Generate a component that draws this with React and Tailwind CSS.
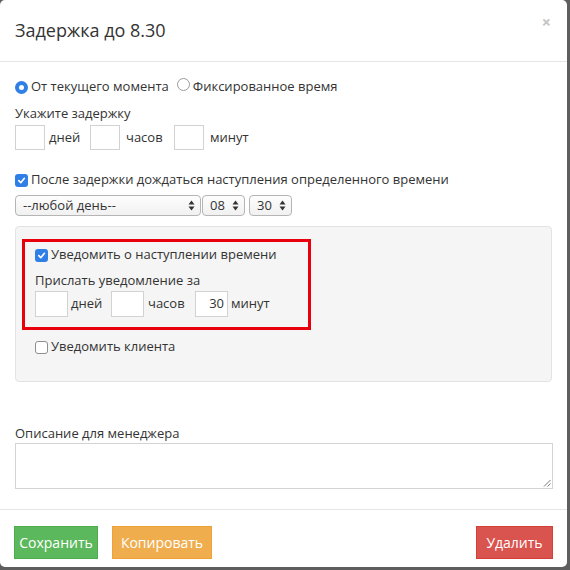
import React from "react";

const font = { fontFamily: '"Open Sans", "Noto Sans", sans-serif' };

function Radio({ checked }) {
  return checked ? (
    <span className="inline-flex h-[13px] w-[13px] items-center justify-center rounded-full bg-[#2f7fe6]">
      <span className="h-[5px] w-[5px] rounded-full bg-white" />
    </span>
  ) : (
    <span className="inline-block h-[13px] w-[13px] rounded-full border border-[#9a9a9a] bg-white" />
  );
}

function Check({ checked }) {
  return checked ? (
    <span className="inline-flex h-[13px] w-[13px] items-center justify-center rounded-[3px] bg-[#2f7fe6]">
      <svg width="9" height="9" viewBox="0 0 10 10">
        <path d="M2 5.2 L4.2 7.4 L8.2 2.6" fill="none" stroke="white" strokeWidth="1.8" strokeLinecap="round" strokeLinejoin="round" />
      </svg>
    </span>
  ) : (
    <span className="inline-block h-[13px] w-[13px] rounded-[3px] border border-[#8e8e8e] bg-white" />
  );
}

function Arrows() {
  return (
    <svg width="7" height="11" viewBox="0 0 7 11" className="shrink-0">
      <path d="M3.5 0.5 L6.5 4.5 L0.5 4.5 Z" fill="#333" />
      <path d="M3.5 10.5 L6.5 6.5 L0.5 6.5 Z" fill="#333" />
    </svg>
  );
}

function Select({ w, text }) {
  return (
    <div
      className={`flex h-[21px] items-center justify-between rounded-[4px] border border-[#b5b5b5] bg-gradient-to-b from-[#fdfdfd] to-[#f1f1f1] pl-[7px] pr-[5px] text-[13px] text-[#333] ${w}`}
    >
      <span>{text}</span>
      <Arrows />
    </div>
  );
}

function Box({ w, h, value }) {
  return (
    <div
      className={`flex items-center justify-end border border-[#d2d2d2] bg-white pr-[3px] text-[13px] text-[#333] ${w} ${h}`}
    >
      {value}
    </div>
  );
}

export default function App() {
  return (
    <div className="h-[570px] w-[570px] bg-[#5e5e5e]" style={font}>
      <div className="flex h-[567px] w-[567px] flex-col rounded-[5px] bg-white text-[#333]">
        {/* header */}
        <div className="flex h-[62px] items-start justify-between border-b border-[#e5e5e5] px-[15px]">
          <h4 className="mt-[16px] text-[18px] leading-[28px] text-[#333]">Задержка до 8.30</h4>
          <span className="mt-[10px] mr-[1px] text-[16px] font-bold text-[#c4c4c4]">×</span>
        </div>

        {/* body */}
        <div className="flex-1 px-[15px] pt-[15px] text-[13px]">
          <div className="flex h-[20px] items-center">
            <Radio checked />
            <span className="ml-[3px]">От текущего момента</span>
            <span className="ml-[8px]">
              <Radio />
            </span>
            <span className="ml-[3px]">Фиксированное время</span>
          </div>
          <div className="mt-[6px] h-[20px] leading-[20px]">Укажите задержку</div>
          <div className="mt-[2px] flex items-center">
            <Box w="w-[30px]" h="h-[25px]" />
            <span className="ml-[4px] w-[41px]">дней</span>
            <Box w="w-[30px]" h="h-[25px]" />
            <span className="ml-[6px] w-[48px]">часов</span>
            <Box w="w-[30px]" h="h-[25px]" />
            <span className="ml-[6px]">минут</span>
          </div>

          <div className="mt-[20px] flex h-[20px] items-center">
            <Check checked />
            <span className="ml-[3px]">После задержки дождаться наступления определенного времени</span>
          </div>
          <div className="mt-[5px] flex">
            <Select w="w-[186px]" text="--любой день--" />
            <span className="ml-[1px]">
              <Select w="w-[43px]" text="08" />
            </span>
            <span className="ml-[4px]">
              <Select w="w-[43px]" text="30" />
            </span>
          </div>

          {/* well */}
          <div className="mt-[10px] h-[156px] rounded-[4px] border border-[#e3e3e3] bg-[#f5f5f5] px-[6px] pt-[12px]">
            <div className="w-[289px] border-[3px] border-[#e8000d] px-[10px] pt-[3px] pb-[10px]">
              <div className="flex h-[20px] items-center">
                <Check checked />
                <span className="ml-[3px]">Уведомить о наступлении времени</span>
              </div>
              <div className="mt-[5px] h-[20px] leading-[20px]">Прислать уведомление за</div>
              <div className="mt-[1px] flex items-center">
                <Box w="w-[33px]" h="h-[26px]" />
                <span className="ml-[3px] w-[40px]">дней</span>
                <Box w="w-[33px]" h="h-[26px]" />
                <span className="ml-[4px] w-[47px]">часов</span>
                <Box w="w-[33px]" h="h-[26px]" value="30" />
                <span className="ml-[3px]">минут</span>
              </div>
            </div>
            <div className="mt-[7px] flex h-[20px] items-center pl-[13px]">
              <Check />
              <span className="ml-[3px]">Уведомить клиента</span>
            </div>
          </div>

          <div className="mt-[41px] h-[20px] leading-[20px]">Описание для менеджера</div>
          <div className="relative h-[46px] w-[538px] border border-[#d4d4d4] bg-white">
            <svg width="8" height="8" viewBox="0 0 8 8" className="absolute right-[1px] bottom-[1px]">
              <path d="M7.5 1 L1 7.5 M7.5 4.5 L4.5 7.5" stroke="#777" strokeWidth="1" />
            </svg>
          </div>
        </div>

        {/* footer */}
        <div className="flex h-[58px] items-start justify-between border-t border-[#e5e5e5] px-[14px] pt-[16px] text-[14px] text-white">
          <div className="flex gap-[14px]">
            <div className="flex h-[33px] w-[84px] items-center justify-center border border-[#4cae4c] bg-[#5cb85c]">Сохранить</div>
            <div className="flex h-[33px] w-[100px] items-center justify-center border border-[#eea236] bg-[#f0ad4e]">Копировать</div>
          </div>
          <div className="flex h-[33px] w-[77px] items-center justify-center border border-[#d43f3a] bg-[#d9534f]">Удалить</div>
        </div>
      </div>
    </div>
  );
}
